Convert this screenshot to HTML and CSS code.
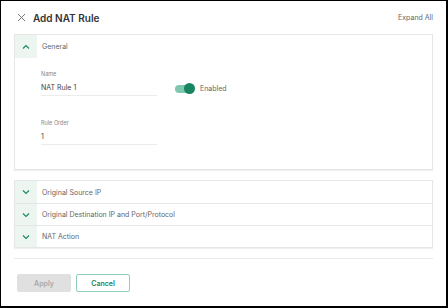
FILE: index.html
```html
<!DOCTYPE html>
<html>
<head>
<meta charset="utf-8">
<link rel="stylesheet" href="styles.css">
</head>
<body>
<div class="frame">
  <header class="top">
    <div class="title">
      <svg class="close" width="9" height="9" viewBox="0 0 9 9"><path d="M1 1L8 8M8 1L1 8" stroke="#666" stroke-width="0.9" fill="none"/></svg>
      <span>Add NAT Rule</span>
    </div>
    <span class="expand">Expand All</span>
  </header>

  <section class="panel general">
    <div class="row">
      <div class="ico"><svg width="8" height="6" viewBox="0 0 8 6"><path d="M1 4.5L4 1.5L7 4.5" stroke="#1a8a66" stroke-width="1.2" fill="none"/></svg></div>
      <div class="lbl">General</div>
    </div>
    <div class="body">
      <div class="line">
        <div class="field">
          <div class="flabel">Name</div>
          <div class="fval">NAT Rule 1</div>
        </div>
        <div class="toggle">
          <span class="track"><span class="knob"></span></span>
          <span class="tlabel">Enabled</span>
        </div>
      </div>
      <div class="field second">
        <div class="flabel">Rule Order</div>
        <div class="fval">1</div>
      </div>
    </div>
  </section>

  <section class="panel group">
    <div class="row">
      <div class="ico"><svg width="8" height="6" viewBox="0 0 8 6"><path d="M1 1.5L4 4.5L7 1.5" stroke="#1a8a66" stroke-width="1.2" fill="none"/></svg></div>
      <div class="lbl">Original Source IP</div>
    </div>
    <div class="row">
      <div class="ico"><svg width="8" height="6" viewBox="0 0 8 6"><path d="M1 1.5L4 4.5L7 1.5" stroke="#1a8a66" stroke-width="1.2" fill="none"/></svg></div>
      <div class="lbl">Original Destination IP and Port/Protocol</div>
    </div>
    <div class="row">
      <div class="ico"><svg width="8" height="6" viewBox="0 0 8 6"><path d="M1 1.5L4 4.5L7 1.5" stroke="#1a8a66" stroke-width="1.2" fill="none"/></svg></div>
      <div class="lbl">NAT Action</div>
    </div>
  </section>

  <div class="divider"></div>

  <div class="actions">
    <button class="btn apply">Apply</button>
    <button class="btn cancel">Cancel</button>
  </div>
</div>
</body>
</html>
```

FILE: styles.css
```css
* { box-sizing: border-box; }
html, body { margin: 0; padding: 0; }
body {
  width: 448px;
  height: 308px;
  background: #fff;
  font-family: Inter, Roboto, "Liberation Sans", sans-serif;
  color: #444;
}
.frame {
  width: 448px;
  height: 308px;
  border-top: 1px solid #000;
  border-left: 1px solid #000;
  border-right: 2px solid #000;
  border-bottom: 2px solid #000;
  padding: 0 13px 0 13px;
}
.top {
  display: flex;
  justify-content: space-between;
  align-items: center;
  height: 33px;
  padding: 0 0 0 3px;
}
.title {
  display: flex;
  align-items: center;
  gap: 7px;
}
.title span {
  font-size: 10px;
  font-weight: 600;
  color: #333;
}
.expand {
  font-size: 7px;
  color: #666;
}
.panel {
  border: 1px solid #e6e6e6;
  box-shadow: 0 1px 1px rgba(0,0,0,0.06);
}
.row {
  display: flex;
  height: 22px;
  align-items: stretch;
}
.group .row + .row { border-top: 1px solid #e6e6e6; }
.ico {
  width: 22px;
  background: #edf5f1;
  display: flex;
  align-items: center;
  justify-content: center;
}
.lbl {
  padding-left: 5px;
  display: flex;
  align-items: center;
  font-size: 7px;
  color: #666;
}
.general .row { height: 23px; }
.body {
  padding: 13px 0 24px 26px;
}
.line {
  display: flex;
  align-items: flex-end;
}
.field { width: 116px; }
.flabel {
  font-size: 5.5px;
  color: #888;
  height: 9px;
}
.fval {
  font-size: 7px;
  color: #444;
  padding-top: 3px;
  height: 16px;
  border-bottom: 1px solid #ebebeb;
}
.second { margin-top: 24px; }
.toggle {
  display: flex;
  align-items: center;
  gap: 6px;
  margin-left: 18px;
  margin-bottom: 3px;
}
.track {
  position: relative;
  width: 19px;
  height: 8px;
  border-radius: 4px;
  background: #7fc7ae;
  display: block;
}
.knob {
  position: absolute;
  right: -1px;
  top: -2px;
  width: 11px;
  height: 11px;
  border-radius: 50%;
  background: #17855f;
}
.tlabel {
  font-size: 7px;
  color: #666;
}
.group { margin-top: 10px; }
.divider {
  margin-top: 10px;
  height: 1px;
  background: #e8e8e8;
}
.actions {
  display: flex;
  gap: 5px;
  padding: 15px 0 0 3px;
}
.btn {
  width: 54px;
  height: 18px;
  border-radius: 2px;
  font-family: Inter, Roboto, "Liberation Sans", sans-serif;
  font-size: 7px;
  font-weight: 600;
  padding: 0;
}
.apply {
  background: #e0e0e0;
  border: 1px solid #e0e0e0;
  color: #a8a8a8;
}
.cancel {
  background: #fff;
  border: 1px solid #8fcfb8;
  color: #17855f;
}
```
